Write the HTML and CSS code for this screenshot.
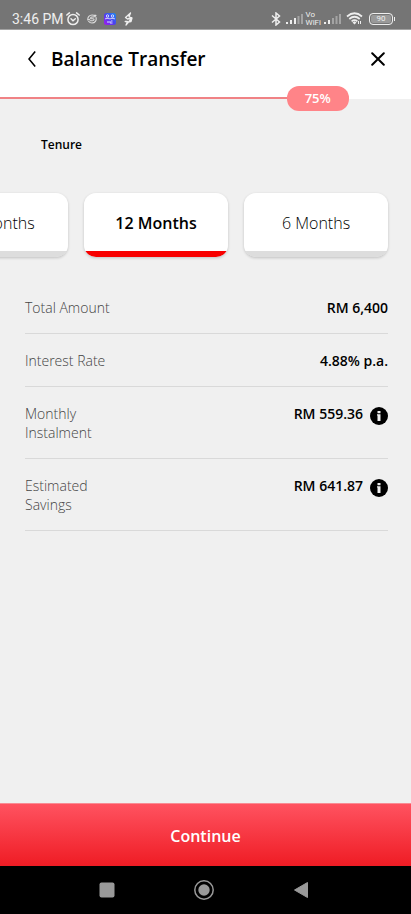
FILE: index.html
```html
<!DOCTYPE html>
<html lang="en">
<head>
<meta charset="utf-8">
<meta name="viewport" content="width=device-width, initial-scale=1">
<title>Balance Transfer</title>
<link rel="stylesheet" href="styles.css">
</head>
<body>
<div class="status">
  <div class="status-group">
    <span class="clock">3:46 PM</span>
    <svg width="14" height="14" viewBox="0 0 14 14" fill="none" stroke="#eee" stroke-width="1.5" stroke-linecap="round" aria-hidden="true"><circle cx="7" cy="7.5" r="5.1"/><path d="M.8 3 3.4.9M13.2 3 10.6.9M5 6.8 7 8.7 9.3 6.7"/></svg>
    <svg class="gap-small" width="10" height="10" viewBox="0 0 10 10" fill="none" stroke="#ddd" stroke-width="1.100" stroke-linecap="round" stroke-linejoin="round" aria-hidden="true"><path d="M.8 6C.5 3 2.500 1 5 1c1.500 0 2.500.5 4 .3C8.500 3 6.500 3 5 3 3.500 3 3 4.800 4.500 4.800H6c1.500 0 1.300 2-.3 2H3M9 3.500c.8 3-1 5.500-4 5.500-1.500 0-2.500-.5-3.300-1.500M.8 6l2-.8"/></svg>
    <svg class="gap-small" width="12" height="12" viewBox="0 0 12 12" aria-hidden="true"><defs><linearGradient id="app" x1="0" y1="1" x2="1" y2="0"><stop offset="0" stop-color="#a515ef"/><stop offset=".5" stop-color="#4a42ee"/><stop offset="1" stop-color="#168cf4"/></linearGradient></defs><rect width="12" height="12" rx="2.500" fill="url(#app)"/><g fill="none" stroke="#d8ddff"><circle cx="3.500" cy="3" r="1.200"/><circle cx="8.500" cy="3" r="1.200"/><path d="M1.700 6.300v-1h3.600v1M6.700 6.300v-1h3.600v1M4 8v2M6 8v2h2.500M8.500 8H7"/></g></svg>
    <svg class="gap-small" width="11" height="14" viewBox="0 0 11 14" fill="none" stroke="#eee" stroke-width="1.300" stroke-linejoin="round" stroke-linecap="round" aria-hidden="true"><path d="M7.500 1 2.500 5.500l2 1.500L9 6 3 13l1.500-3.500H2.200M7.500 1 6 4.800l3 1.200-1 3.500-3 .5"/></svg>
  </div>
  <div class="status-group">
    <svg width="10" height="14" viewBox="0 0 10 14" fill="none" stroke="#eee" stroke-width="1.500" aria-hidden="true"><path d="M1 3.500 8.500 10 5 13V1l3.500 3L1 10.500"/></svg>
    <svg class="signal" width="17" height="12" viewBox="0 0 17 12" aria-hidden="true"><path fill="#eee" d="M0 9h2v2H0zM4 7h2v4H4zM8 5h2v6H8z"/><path fill="#a4a4a4" d="M11.500 3h2v8h-2zM15 1h2v10h-2z"/></svg>
    <span class="vowifi"><span>Vo</span><span>WiFi</span></span>
    <svg class="signal" width="17" height="12" viewBox="0 0 17 12" aria-hidden="true"><path fill="#eee" d="M0 9h2v2H0zM4 7h2v4H4z"/><path fill="#a4a4a4" d="M8 5h2v6H8zM11.500 3h2v8h-2zM15 1h2v10h-2z"/></svg>
    <svg class="wifi" width="17" height="13" viewBox="0 0 17 13" fill="none" stroke="#eee" stroke-width="1.700" aria-hidden="true"><path d="M1 4.500q7.500-6.500 15 0M3.300 7q5.200-4.500 10.400 0M5.600 9.300q2.900-2.500 5.800 0"/><path fill="#eee" stroke="none" d="m6.500 10.500 2-1.200 2 1.200-2 2zM12 9h1v3h-1zM14 9h1v3h-1z"/></svg>
    <span class="battery">90</span>
  </div>
</div>
<header class="header">
  <button class="icon-button" type="button" aria-label="Back"><svg width="8" height="16" viewBox="0 0 8 16" fill="none" stroke="#000" stroke-width="1.600"><path d="M7.200.600 1 8l6.200 7.400"/></svg></button>
  <h1>Balance Transfer</h1>
  <button class="icon-button" type="button" aria-label="Close"><svg width="14" height="14" viewBox="0 0 14 14" fill="none" stroke="#000" stroke-width="2" stroke-linecap="round"><path d="m1.200 1.200 11.600 11.600M12.800 1.200 1.200 12.800"/></svg></button>
</header>
<div class="progress" role="progressbar" aria-label="Progress" aria-valuenow="75" aria-valuemin="0" aria-valuemax="100"><span class="progress-line"></span><span class="progress-label">75%</span></div>
<main>
  <h2 id="tenure">Tenure</h2>
  <div class="tenures" role="group" aria-labelledby="tenure">
    <button class="tenure" type="button">18 Months</button>
    <button class="tenure selected" type="button" aria-pressed="true">12 Months</button>
    <button class="tenure" type="button">6 Months</button>
  </div>
  <dl>
    <div class="row"><dt>Total Amount</dt><dd>RM 6,400</dd></div>
    <div class="row"><dt>Interest Rate</dt><dd>4.88% p.a.</dd></div>
    <div class="row"><dt>Monthly Instalment</dt><dd>RM 559.36<button class="info" type="button" aria-label="About monthly instalment"><svg width="18" height="18" viewBox="0 0 18 18"><circle cx="9" cy="9" r="9"/><path fill="#f0f0f0" d="M7.500 4h3v2.200h-3zM7 7.200h3.500V14h-3V8.500H7z"/></svg></button></dd></div>
    <div class="row"><dt>Estimated Savings</dt><dd>RM 641.87<button class="info" type="button" aria-label="About estimated savings"><svg width="18" height="18" viewBox="0 0 18 18"><circle cx="9" cy="9" r="9"/><path fill="#f0f0f0" d="M7.500 4h3v2.200h-3zM7 7.200h3.500V14h-3V8.500H7z"/></svg></button></dd></div>
  </dl>
</main>
<button class="continue" type="button">Continue</button>
<nav class="system-nav" aria-label="System">
  <button type="button" aria-label="Recent apps"><svg width="20" height="20" viewBox="0 0 20 20"><rect x="2.500" y="2.500" width="15" height="15" rx="2" fill="#999"/></svg></button>
  <button type="button" aria-label="Home"><svg width="20" height="20" viewBox="0 0 20 20"><circle cx="10" cy="10" r="9.200" fill="none" stroke="#999" stroke-width="1.500"/><circle cx="10" cy="10" r="5.700" fill="#999"/></svg></button>
  <button type="button" aria-label="Back"><svg width="20" height="20" viewBox="0 0 20 20"><path d="M16.500 2.500v15L3.500 10z" fill="#999" stroke="#999" stroke-linejoin="round"/></svg></button>
</nav>
</body>
</html>
```
FILE: styles.css
```css
* { box-sizing: border-box; }
body {
  display: flex;
  flex-direction: column;
  min-height: 100vh;
  margin: 0;
  background: #f0f0f0;
  color: #000;
  font-family: "Open Sans", "Noto Sans", sans-serif;
}
button { padding: 0; border: 0; background: none; color: inherit; font: inherit; }
svg { display: block; flex: none; }
h1, h2, dl, dd { margin: 0; }

.status {
  display: flex;
  justify-content: space-between;
  height: 30px;
  padding: 8px 16px 0 12px;
  border-bottom: 1px solid #a2a2a2;
  background: #757575;
  color: #eee;
  font-family: Roboto, sans-serif;
}
.status-group { display: flex; align-items: center; height: 21px; }
.clock { margin-right: 2px; font-size: 14px; }
.gap-small { margin-left: 7px; }
.signal { margin-left: 5px; }
.vowifi { display: grid; margin: 0 0 0 3px; font-size: 8px; line-height: 8px; }
.signal + .vowifi + .signal { margin-left: 3px; }
.wifi { margin-left: 5px; }
.battery {
  position: relative;
  width: 24px;
  height: 12px;
  margin: 0 2px 0 6px;
  border: 1px solid #eee;
  border-radius: 4px;
  background: #999;
  box-shadow: inset 0 0 0 1px #757575;
  font-size: 8px;
  line-height: 10px;
  text-align: center;
}
.battery::after { content: ""; position: absolute; top: 3px; right: -3px; width: 1px; height: 4px; background: #eee; }

.header { display: flex; align-items: center; height: 69px; padding: 0 25px 12px 24px; background: #fff; }
.header h1 { flex: 1; margin-left: 11px; font-size: 19px; line-height: 28px; font-weight: 600; }
.icon-button { display: grid; place-items: center; width: 16px; height: 24px; }

.progress { display: flex; align-items: center; height: 24px; margin-top: -13px; }
.progress-line { width: 70%; height: 2px; background: #f08285; }
.progress-label {
  width: 62px;
  margin-left: -1px;
  border-radius: 12px;
  background: #ff8488;
  color: #fff;
  font-size: 13px;
  line-height: 25px;
  font-weight: 600;
  text-align: center;
}

main { flex: 1; }
h2 { padding: 25px 41px 0; font-size: 12px; line-height: 20px; font-weight: 600; }
.tenures { display: flex; justify-content: flex-end; gap: 16px; overflow: hidden; padding: 38px 23px 8px 0; }
.tenure {
  flex: none;
  width: 144px;
  height: 64px;
  padding: 2px 0 6px;
  border-radius: 12px;
  background: linear-gradient(#fff 58px, #ddd 58px);
  box-shadow: 0 1px 3px rgb(0 0 0 / 20%);
  font-size: 16px;
  font-weight: 300;
}
.selected { background: linear-gradient(#fff 58px, #f80000 58px); font-weight: 600; }

dl { padding: 16px 23px 0 25px; }
.row {
  display: flex;
  justify-content: space-between;
  padding: 17px 0 16px;
  border-bottom: 1px solid #d9d9d9;
  font-size: 14px;
  line-height: 19px;
}
dt { max-width: 100px; color: #444; font-weight: 300; }
dd { display: flex; height: 19px; font-weight: 600; }
.info { align-self: flex-start; margin: 3px 0 0 7px; }

.continue {
  height: 63px;
  padding-top: 2px;
  border-top: 1px solid #f98b93;
  background: linear-gradient(#ff5260, #ef1c24);
  color: #fff;
  font-size: 16px;
  font-weight: 600;
}
.system-nav { display: flex; justify-content: center; gap: 77px; height: 48px; padding-right: 3px; background: #000; }
.system-nav button { width: 20px; }
```
